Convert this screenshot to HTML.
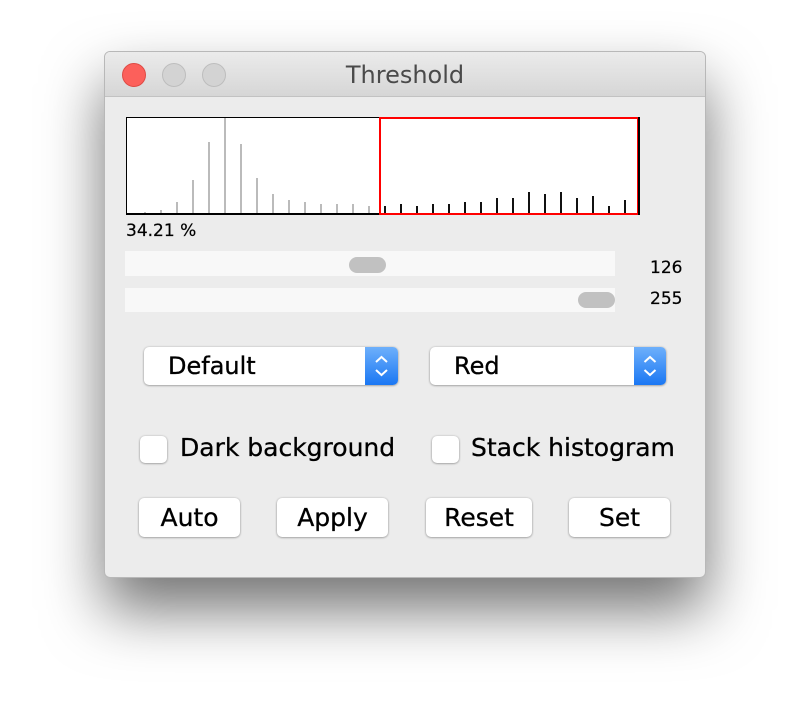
<!DOCTYPE html>
<html><head><meta charset="utf-8"><style>
*{margin:0;padding:0;box-sizing:border-box}
body{width:810px;height:726px;background:#fff;position:relative;overflow:hidden;font-family:"DejaVu Sans","Liberation Sans",sans-serif}
.win{position:absolute;left:104px;top:51px;width:602px;height:527px;background:#ececec;border-radius:6px;border:1px solid #b8b8b8;box-shadow:0 32px 60px rgba(0,0,0,0.55);overflow:hidden}
.tb{position:absolute;left:0;top:0;width:100%;height:45px;background:linear-gradient(#ebebeb,#d6d6d6);border-bottom:1px solid #c2c2c2}
.tl{position:absolute;top:11px;width:24px;height:24px;border-radius:50%;background:#d3d3d3;border:1px solid #bdbdbd}
.title{position:absolute;left:0;width:100%;top:9px;text-align:center;font-size:24px;color:#4a4a4a}
.abs{position:absolute}
.track{position:absolute;left:20px;width:490px;background:#f8f8f8}
.thumb{position:absolute;height:16px;border-radius:8px;background:#c1c1c1}
.num{position:absolute;font-size:17px;color:#000;-webkit-text-stroke:0.2px #000}
.sel{position:absolute;height:38px;background:#fff;border-radius:5px;box-shadow:0 0.5px 2px rgba(0,0,0,0.45);font-size:24px;line-height:38px;padding-left:24px;overflow:hidden;-webkit-text-stroke:0.3px #000}
.sel .ar{position:absolute;right:0;top:0;width:33px;height:38px;background:linear-gradient(#6eb0fb,#1a77f3)}
.cb{position:absolute;width:27px;height:27px;background:#fff;border-radius:5px;box-shadow:0 0.5px 2px rgba(0,0,0,0.45)}
.lbl{position:absolute;font-size:25px;color:#000;-webkit-text-stroke:0.3px #000}
.btn{position:absolute;top:446px;height:39px;background:#fff;border-radius:5px;box-shadow:0 0.5px 2px rgba(0,0,0,0.45);font-size:25px;text-align:center;line-height:39px;-webkit-text-stroke:0.3px #000}
</style></head><body>
<div class="win">
 <div class="tb">
  <div class="tl" style="left:17px;background:#fc605b;border-color:#de4b45"></div>
  <div class="tl" style="left:57px"></div>
  <div class="tl" style="left:97px"></div>
  <div class="title">Threshold</div>
 </div>
 <svg class="abs" style="left:0;top:0" width="602" height="200">
  <rect x="21.5" y="65.5" width="513" height="97" fill="#fff" stroke="#000" stroke-width="1"/>
  <line x1="21" y1="162" x2="535" y2="162" stroke="#000" stroke-width="2"/>
  <g stroke="#bbb" stroke-width="2">
   <line x1="40" x2="40" y1="161" y2="160"/><line x1="56" x2="56" y1="161" y2="158"/><line x1="72" x2="72" y1="161" y2="150"/><line x1="88" x2="88" y1="161" y2="128"/><line x1="104" x2="104" y1="161" y2="90"/><line x1="120" x2="120" y1="161" y2="66"/><line x1="136" x2="136" y1="161" y2="92"/><line x1="152" x2="152" y1="161" y2="126"/><line x1="168" x2="168" y1="161" y2="142"/><line x1="184" x2="184" y1="161" y2="148"/><line x1="200" x2="200" y1="161" y2="150"/><line x1="216" x2="216" y1="161" y2="152"/><line x1="232" x2="232" y1="161" y2="152"/><line x1="248" x2="248" y1="161" y2="152"/><line x1="264" x2="264" y1="161" y2="154"/>
  </g>
  <g stroke="#111" stroke-width="2">
   <line x1="280" x2="280" y1="161" y2="154"/><line x1="296" x2="296" y1="161" y2="152"/><line x1="312" x2="312" y1="161" y2="154"/><line x1="328" x2="328" y1="161" y2="152"/><line x1="344" x2="344" y1="161" y2="152"/><line x1="360" x2="360" y1="161" y2="150"/><line x1="376" x2="376" y1="161" y2="150"/><line x1="392" x2="392" y1="161" y2="146"/><line x1="408" x2="408" y1="161" y2="146"/><line x1="424" x2="424" y1="161" y2="140"/><line x1="440" x2="440" y1="161" y2="142"/><line x1="456" x2="456" y1="161" y2="140"/><line x1="472" x2="472" y1="161" y2="146"/><line x1="488" x2="488" y1="161" y2="144"/><line x1="504" x2="504" y1="161" y2="154"/><line x1="520" x2="520" y1="161" y2="148"/>
  </g>
  <rect x="275" y="66" width="258" height="96" fill="none" stroke="#f00" stroke-width="2"/>
  <line x1="534" y1="65" x2="534" y2="163" stroke="#000" stroke-width="2"/>
 </svg>
 <div class="abs" style="left:21px;top:169px;font-size:17px;-webkit-text-stroke:0.2px #000">34.21 %</div>
 <div class="track" style="top:199px;height:25px"></div>
 <div class="thumb" style="left:244px;top:205px;width:37px"></div>
 <div class="num" style="left:545px;top:206px">126</div>
 <div class="track" style="top:236px;height:24px"></div>
 <div class="thumb" style="left:473px;top:240px;width:37px"></div>
 <div class="num" style="left:545px;top:237px">255</div>
 <div class="sel" style="left:39px;top:295px;width:254px">Default<div class="ar"><svg width="33" height="38"><path d="M11 15l5.5-5 5.5 5M11 23l5.5 5 5.5-5" fill="none" stroke="#fff" stroke-width="2"/></svg></div></div>
 <div class="sel" style="left:325px;top:295px;width:236px">Red<div class="ar" style="width:32px"><svg width="32" height="38"><path d="M10.5 15l5.5-5 5.5 5M10.5 23l5.5 5 5.5-5" fill="none" stroke="#fff" stroke-width="2"/></svg></div></div>
 <div class="cb" style="left:35px;top:384px"></div>
 <div class="lbl" style="left:75px;top:381px">Dark background</div>
 <div class="cb" style="left:327px;top:384px"></div>
 <div class="lbl" style="left:366px;top:381px">Stack histogram</div>
 <div class="btn" style="left:34px;width:101px">Auto</div>
 <div class="btn" style="left:172px;width:111px">Apply</div>
 <div class="btn" style="left:321px;width:106px">Reset</div>
 <div class="btn" style="left:464px;width:101px">Set</div>
</div>
</body></html>
